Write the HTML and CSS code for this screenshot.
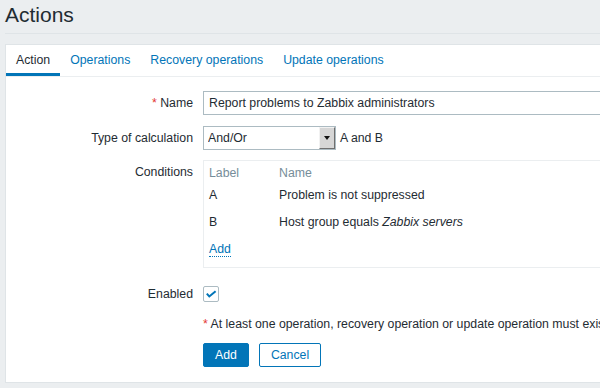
FILE: index.html
```html
<!DOCTYPE html>
<html lang="en">
<head>
  <meta charset="UTF-8" />
  <title>Actions</title>
  <link rel="stylesheet" href="styles.css">
</head>
<body>
  <div class="page">
    <header class="header">
      <h1>Actions</h1>
    </header>

    <div class="container">
      <!-- tabs -->
      <ul class="tabs">
        <li class="tab active">Action</li>
        <li class="tab"><a href="#">Operations</a></li>
        <li class="tab"><a href="#">Recovery operations</a></li>
        <li class="tab"><a href="#">Update operations</a></li>
      </ul>

      <form class="form">
        <div class="row row-name">
          <label class="label" for="name"><span class="req">*</span> Name</label>
          <div class="field">
            <input type="text" id="name" class="input" value="Report problems to Zabbix administrators" />
          </div>
        </div>

        <div class="row row-calc">
          <label class="label" for="calc">Type of calculation</label>
          <div class="field field-inline">
            <div class="select-wrap">
              <select id="calc" class="select">
                <option>And/Or</option>
              </select>
              <span class="select-btn"><span class="arrow"></span></span>
            </div>
            <span class="calc-text">A and B</span>
          </div>
        </div>

        <div class="row row-cond">
          <div class="label">Conditions</div>
          <div class="field">
            <div class="cond-box">
              <table class="cond-table">
                <thead>
                  <tr><th class="col-label">Label</th><th>Name</th></tr>
                </thead>
                <tbody>
                  <tr><td>A</td><td>Problem is not suppressed</td></tr>
                  <tr><td>B</td><td>Host group equals <em>Zabbix servers</em></td></tr>
                  <tr class="add-row"><td colspan="2"><a href="#" class="link-dotted">Add</a></td></tr>
                </tbody>
              </table>
            </div>
          </div>
        </div>

        <div class="row row-enabled">
          <label class="label" for="enabled">Enabled</label>
          <div class="field">
            <span class="checkbox" id="enabled">
              <svg width="16" height="16" viewBox="0 0 16 16">
                <path d="M3.8 7.6 L6.3 10.4 L12.6 5.2" fill="none" stroke="#0275b8" stroke-width="2"/>
              </svg>
            </span>
          </div>
        </div>

        <div class="row row-note">
          <div class="label"></div>
          <div class="field note"><span class="req">*</span> At least one operation, recovery operation or update operation must exist.</div>
        </div>

        <div class="row row-buttons">
          <div class="label"></div>
          <div class="field buttons">
            <button type="button" class="btn btn-primary">Add</button>
            <button type="button" class="btn btn-alt">Cancel</button>
          </div>
        </div>
      </form>
    </div>
  </div>
</body>
</html>
```

FILE: styles.css
```css
/* base */
html, body {
  overflow: hidden;
}
body {
  margin: 0;
  background: #ebeef0;
  color: #1f2c33;
  font-family: "Liberation Sans", Arial, sans-serif;
  font-size: 12.3px;
  line-height: 14px;
}
a {
  color: #0275b8;
  text-decoration: none;
}
.page {
  width: 760px;
  padding-left: 5px;
}

/* header */
.header {
  padding: 3px 0 6px;
  border-bottom: 1px solid #dfe4e7;
}
.header h1 {
  margin: 0;
  font-size: 21px;
  line-height: 24px;
  font-weight: normal;
}

/* container */
.container {
  margin-top: 10px;
  background: #fff;
  border: 1px solid #dfe4e7;
  padding-bottom: 15px;
}

/* tabs */
.tabs {
  display: flex;
  list-style: none;
  margin: 0;
  padding: 0;
  border-bottom: 1px solid #ebeef0;
}
.tab {
  padding: 8px 10px 6px;
  border-bottom: 3px solid transparent;
}
.tab.active {
  border-bottom-color: #0275b8;
}

/* form */
.form {
  padding-top: 14px;
}
.row {
  display: flex;
  align-items: flex-start;
}
.row-calc { margin-top: 11px; }
.row-cond { margin-top: 10px; }
.row-enabled { margin-top: 14px; }
.row-note { margin-top: 15px; }
.row-buttons { margin-top: 12px; }

.label {
  flex: 0 0 187px;
  text-align: right;
  padding-top: 5px;
  margin-right: 10px;
}
.row-note .label,
.row-buttons .label {
  padding-top: 0;
}
.req {
  color: #e33734;
}
.field {
  flex: 1;
}
.field-inline {
  display: flex;
  align-items: center;
}

.input {
  box-sizing: border-box;
  width: 453px;
  height: 24px;
  padding: 0 5px;
  border: 1px solid #acbbc2;
  font: inherit;
  color: #1f2c33;
  outline: none;
}

/* select */
.select-wrap {
  display: flex;
  width: 133px;
  height: 24px;
  box-sizing: border-box;
  border: 1px solid #acbbc2;
}
.select {
  flex: 1;
  border: none;
  padding: 0 4px;
  font: inherit;
  color: #1f2c33;
  background: #fff;
  appearance: none;
  -webkit-appearance: none;
  outline: none;
}
.select-btn {
  display: flex;
  align-items: center;
  justify-content: center;
  width: 14px;
  background: #d6d6d6;
  border-left: 1px solid #f2f2f2;
  border-top: 1px solid #f2f2f2;
  border-right: 1px solid #6f6f6f;
  border-bottom: 1px solid #6f6f6f;
}
.arrow {
  width: 0;
  height: 0;
  border-left: 3px solid transparent;
  border-right: 3px solid transparent;
  border-top: 4px solid #111;
}
.calc-text {
  margin-left: 4px;
}

/* conditions */
.cond-box {
  width: 600px;
  border: 1px solid #ebeef0;
}
.cond-table {
  border-collapse: collapse;
}
.cond-table th {
  font-weight: normal;
  color: #768d99;
  text-align: left;
  padding: 5px 5px 1px;
}
.cond-table .col-label {
  width: 60px;
}
.cond-table td {
  padding: 7px 5px 6px;
}
.cond-table .add-row td {
  padding-bottom: 11px;
}
.link-dotted {
  border-bottom: 1px dotted #0275b8;
}

/* checkbox */
.row-enabled .field {
  padding-top: 4px;
}
.checkbox {
  display: block;
  width: 16px;
  height: 16px;
  box-sizing: border-box;
  border: 1px solid #acbbc2;
  border-radius: 2px;
}
.checkbox svg {
  display: block;
  margin: -1px;
}

/* buttons */
.buttons {
  display: flex;
  gap: 10px;
}
.btn {
  height: 24px;
  padding: 0 11px;
  font: inherit;
  border-radius: 2px;
  cursor: pointer;
}
.btn-primary {
  background: #0275b8;
  border: 1px solid #0275b8;
  color: #fff;
}
.btn-alt {
  background: #fff;
  border: 1px solid #0275b8;
  color: #0275b8;
}
```
